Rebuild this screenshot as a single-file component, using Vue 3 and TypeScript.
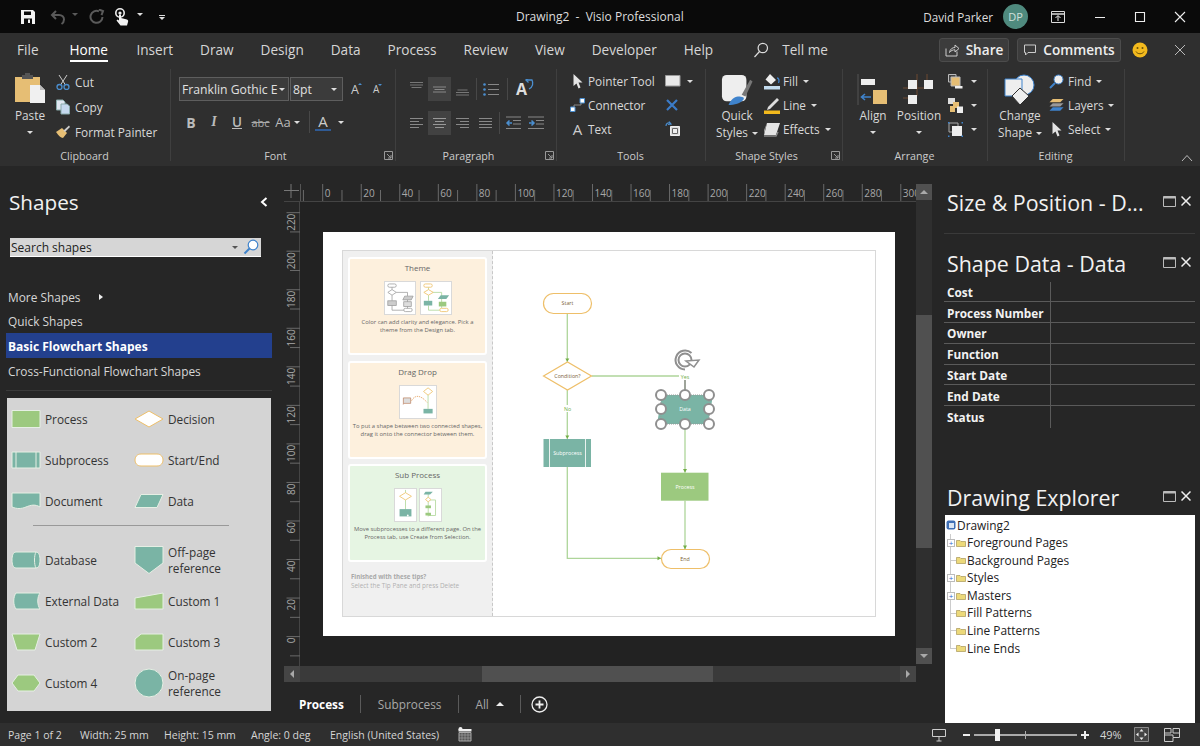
<script setup lang="ts">
const tabs = ['Insert', 'Draw', 'Design', 'Data', 'Process', 'Review', 'View', 'Developer', 'Help']

const TEAL = '#7ab4a5'
const GREEN = '#9cc97f'
const ORANGE = '#eebf69'

interface StencilItem {
  label: string[]
  d: string
  fill: string
  stroke?: string
  extra?: string
}

const stencilTop: StencilItem[] = [
  { label: ['Process'], d: 'M1 6.5H29V23.5H1Z', fill: GREEN },
  { label: ['Decision'], d: 'M1 15L15 7L29 15L15 23Z', fill: '#fff', stroke: ORANGE },
  { label: ['Subprocess'], d: 'M1 7H29V23H1Z', fill: TEAL, extra: 'M5 7V23M25 7V23' },
  { label: ['Start/End'], d: 'M7 9H23C31 9 31 21 23 21H7C-1 21 -1 9 7 9Z', fill: '#fff', stroke: ORANGE },
  { label: ['Document'], d: 'M1 7H29V21C24 18 20 19 15 21C10 23 6 23 1 21Z', fill: TEAL },
  { label: ['Data'], d: 'M7 8.5H29L23 21.5H1Z', fill: TEAL },
]

const stencilBottom: StencilItem[] = [
  { label: ['Database'], d: 'M5 7H25C28 7 29 11 29 15C29 19 28 23 25 23H5C2 23 1 19 1 15C1 11 2 7 5 7Z', fill: TEAL, extra: 'M25 7C23 10 23 20 25 23' },
  { label: ['Off-page', 'reference'], d: 'M1 1.5H29V18L15 28.5L1 18Z', fill: TEAL },
  { label: ['External Data'], d: 'M5 7H29C26 11 26 19 29 23H5C2 19 2 11 5 7Z', fill: TEAL },
  { label: ['Custom 1'], d: 'M1 12L29 7V23H1Z', fill: GREEN },
  { label: ['Custom 2'], d: 'M1 7H29L24 23H6Z', fill: GREEN },
  { label: ['Custom 3'], d: 'M7 7H29V23H1V12Z', fill: GREEN },
  { label: ['Custom 4'], d: 'M7 7H23L29 15L23 23H7L1 15Z', fill: GREEN },
  { label: ['On-page', 'reference'], d: 'M1 15a14 14 0 1 0 28 0a14 14 0 1 0 -28 0Z', fill: TEAL },
]

const dataRows = ['Cost', 'Process Number', 'Owner', 'Function', 'Start Date', 'End Date', 'Status']

const treeRows = [
  { label: 'Foreground Pages', plus: true },
  { label: 'Background Pages', plus: false },
  { label: 'Styles', plus: true },
  { label: 'Masters', plus: true },
  { label: 'Fill Patterns', plus: false },
  { label: 'Line Patterns', plus: false },
  { label: 'Line Ends', plus: false },
]

// ruler scale: 1.927 px per unit, value 0 sits on the page edge
const rulerX = (v: number) => 322.7 + v * 1.927
const rulerY = (v: number) => 636.6 - v * 1.927
const hTicks: number[] = []
for (let v = -10; v <= 310; v += 10) hTicks.push(v)
const vTicks: number[] = []
for (let v = -10; v <= 230; v += 10) vTicks.push(v)
const isLabel = (v: number) => v >= 0 && v % 20 === 0
</script>

<template>
  <div class="app">
    <header class="titlebar">
      <div class="qat">
        <svg class="qat-save" width="16" height="16" viewBox="0 0 16 16"><path d="M1 1H13L15 3V15H1Z" fill="#f2f2f2"/><path d="M4 2.5H11V6H4Z" fill="#0a0a0a"/><path d="M4 9.5H12V15H4Z" fill="#0a0a0a"/><path d="M8 10.5H10V14H8Z" fill="#f2f2f2"/></svg>
        <svg class="qat-undo" width="16" height="16" viewBox="0 0 16 16" fill="none" stroke="#5a5a5a" stroke-width="2"><path d="M6 2L2 6L6 10"/><path d="M2 6H9C12 6 14 8 14 10.5C14 12.5 13 14 11.5 15"/></svg>
        <span class="caret dim qat-c1"></span>
        <svg class="qat-redo" width="16" height="16" viewBox="0 0 16 16" fill="none" stroke="#5a5a5a" stroke-width="2"><path d="M13.5 8A6 6 0 1 1 10 2.4"/><path d="M9 1H13.5V5.5" transform="rotate(20 11 3)"/></svg>
        <svg class="qat-touch" width="16" height="18" viewBox="0 0 16 18"><circle cx="6" cy="5" r="4.2" fill="none" stroke="#eee" stroke-width="1.6"/><circle cx="6" cy="5" r="1.6" fill="#eee"/><path d="M5 6.5H7V10L13 11.5C14 12 14.5 13 14 14L13 17.5H6.5L2.5 12.5L3.5 11.5L5 12.5Z" fill="#f2f2f2"/></svg>
        <span class="caret qat-c2"></span>
        <span class="qat-more"><i></i><span class="caret"></span></span>
      </div>
      <div class="doc-title">Drawing2&nbsp; -&nbsp; Visio Professional</div>
      <div class="account">
        <span class="user">David Parker</span>
        <span class="avatar">DP</span>
      </div>
      <div class="window-btns">
        <svg width="16" height="14" viewBox="0 0 16 14" fill="none" stroke="#ddd"><path d="M1.5 1.5H14.5V12.5H1.5Z"/><path d="M1.5 4H14.5" stroke-width="1.5"/><path d="M8 11V6M5.5 8L8 5.5L10.5 8" stroke="#eee"/></svg>
        <svg width="12" height="12" viewBox="0 0 12 12" stroke="#eee"><path d="M1 6.5H11"/></svg>
        <svg width="12" height="12" viewBox="0 0 12 12" fill="none" stroke="#eee" stroke-width="1.1"><path d="M1.5 1.5H10.5V10.5H1.5Z"/></svg>
        <svg width="12" height="12" viewBox="0 0 12 12" stroke="#eee" stroke-width="1.1"><path d="M1 1L11 11M11 1L1 11"/></svg>
      </div>
    </header>

    <nav class="tabbar">
      <span class="tab file">File</span>
      <span class="tab home">Home</span>
      <span v-for="t in tabs" :key="t" class="tab">{{ t }}</span>
      <span class="tell">
        <svg width="16" height="16" viewBox="0 0 16 16" fill="none" stroke="#ddd" stroke-width="1.2"><circle cx="9.8" cy="6" r="4.7"/><path d="M6.5 9.5L1.5 15"/></svg>
        Tell me
      </span>
      <span class="spacer"></span>
      <button type="button" class="pill share">
        <svg width="15" height="14" viewBox="0 0 15 14" fill="none" stroke="#ccc"><path d="M1 5.5V13H12V8.5"/><path d="M4.5 9.5C5 6 7.5 4.5 10 4.5V2L14 5.5L10 9V6.8C8 6.8 6 7.5 4.5 9.5Z"/></svg>
        Share
      </button>
      <button type="button" class="pill comments">
        <svg width="14" height="14" viewBox="0 0 14 14" fill="none" stroke="#ccc"><path d="M1.5 2H12.5V9.5H5L2.5 12V9.5H1.5Z"/></svg>
        Comments
      </button>
      <svg class="smiley" width="16" height="16" viewBox="0 0 16 16"><circle cx="8" cy="8" r="7.5" fill="#f2b91d"/><circle cx="5.5" cy="6" r="1" fill="#6a5008"/><circle cx="10.5" cy="6" r="1" fill="#6a5008"/><path d="M4 9.5C5.5 12.5 10.5 12.5 12 9.5" fill="none" stroke="#6a5008"/></svg>
      <svg class="tab-close" width="12" height="12" viewBox="0 0 12 12" stroke="#bbb"><path d="M1 1L11 11M11 1L1 11"/></svg>
    </nav>

    <section class="ribbon">
      <!-- Clipboard -->
      <div class="group g-clipboard">
        <div class="group-body">
          <div class="big paste">
            <svg width="32" height="34" viewBox="0 0 32 34"><path d="M1 5H26V30H1Z" fill="#e6be74"/><path d="M8 3H19V7H8Z" fill="#555"/><path d="M11 1H16V4H11Z" fill="#555"/><path d="M16 13H26L31 18V31H16Z" fill="#f0f0f0"/><path d="M26 13V18H31" fill="#bbb"/></svg>
            <span>Paste</span>
            <span class="caret"></span>
          </div>
          <div class="rows">
            <div class="row"><svg width="14" height="16" viewBox="0 0 14 16" fill="none"><path d="M3 1L9.5 11M11 1L4.5 11" stroke="#ccc"/><circle cx="3.5" cy="13" r="2.5" stroke="#4b8fd0" stroke-width="1.3"/><circle cx="10.5" cy="13" r="2.5" stroke="#4b8fd0" stroke-width="1.3"/></svg>Cut</div>
            <div class="row"><svg width="14" height="16" viewBox="0 0 14 16"><path d="M0.5 1H7L9 3V11H0.5Z" fill="#dfe7f1" stroke="#8aa"/><path d="M5 5H11L13.5 7V15H5Z" fill="#c5d8ee" stroke="#8aa"/></svg>Copy</div>
            <div class="row"><svg width="14" height="14" viewBox="0 0 14 14"><path d="M0 7L6 3L11 8L7 13C5 13 2 10 0 7Z" fill="#e6be74"/><path d="M7.5 5.5L13 0.5L14 2L9 7Z" fill="#ccc"/></svg>Format Painter</div>
          </div>
        </div>
        <div class="group-label">Clipboard</div>
      </div>

      <!-- Font -->
      <div class="group g-font">
        <div class="group-body col">
          <div class="font-row">
            <div class="combo combo-font"><span>Franklin Gothic E</span><span class="caret"></span></div>
            <div class="combo combo-size"><span>8pt</span><span class="caret"></span></div>
            <span class="grow">A<i></i></span>
            <span class="shrink">A<i></i></span>
          </div>
          <div class="fmt-row">
            <span class="fmt b">B</span>
            <span class="fmt i">I</span>
            <span class="fmt u">U</span>
            <span class="fmt s">abc</span>
            <span class="fmt aa">Aa</span>
            <span class="caret"></span>
            <span class="vsep"></span>
            <span class="fmt color">A</span>
            <span class="caret"></span>
          </div>
        </div>
        <div class="group-label launch">Font</div>
        <svg class="launcher" width="9" height="9" viewBox="0 0 9 9" fill="none" stroke="#999"><path d="M0.5 8.5V0.5H8.5V8.5Z"/><path d="M3 3L7 7M4 7H7V4"/></svg>
      </div>

      <!-- Paragraph -->
      <div class="group g-para">
        <div class="group-body col">
          <div class="para-row">
            <span class="pbtn"><svg width="15" height="15" viewBox="0 0 15 15" stroke="#777" stroke-width="1.2"><path d="M1 .5H14M1 3H14M2.5 5.5H12.5"/></svg></span>
            <span class="pbtn on"><svg width="15" height="15" viewBox="0 0 15 15" stroke="#888" stroke-width="1.2"><path d="M1 5H14M2.5 7.5H12.5M1 10H14"/></svg></span>
            <span class="pbtn"><svg width="15" height="15" viewBox="0 0 15 15" stroke="#777" stroke-width="1.2"><path d="M2.5 8H12.5M1 10.5H14M1 13H14"/></svg></span>
            <span class="vsep"></span>
            <svg class="bullets" width="16" height="15" viewBox="0 0 16 15"><path d="M5 2.5H16M5 7.5H16M5 12.5H16" stroke="#888" stroke-width="1.2"/><circle cx="1.5" cy="2.5" r="1.3" fill="#4b8fd0"/><circle cx="1.5" cy="7.5" r="1.3" fill="#4b8fd0"/><circle cx="1.5" cy="12.5" r="1.3" fill="#4b8fd0"/></svg>
            <span class="vsep"></span>
            <span class="textdir">A<svg width="9" height="12" viewBox="0 0 9 12" fill="none" stroke="#4b8fd0" stroke-width="1.3"><path d="M1 1H7C8.5 4 8 8 4 10"/><path d="M3.5 3.5L1 1L3.5 -0.5"/></svg></span>
          </div>
          <div class="para-row second">
            <span class="pbtn"><svg width="15" height="15" viewBox="0 0 15 15" stroke="#888"><path d="M1 2.5H14M1 5.5H10M1 8.5H14M1 11.5H10"/></svg></span>
            <span class="pbtn on"><svg width="15" height="15" viewBox="0 0 15 15" stroke="#999"><path d="M1 2.5H14M3 5.5H12M1 8.5H14M3 11.5H12"/></svg></span>
            <span class="pbtn"><svg width="15" height="15" viewBox="0 0 15 15" stroke="#888"><path d="M1 2.5H14M5 5.5H14M1 8.5H14M5 11.5H14"/></svg></span>
            <span class="pbtn"><svg width="15" height="15" viewBox="0 0 15 15" stroke="#888"><path d="M1 2.5H14M1 5.5H14M1 8.5H14M1 11.5H14"/></svg></span>
            <span class="vsep"></span>
            <span class="pbtn"><svg width="16" height="14" viewBox="0 0 16 14"><path d="M1 1H16M8 4.5H16M8 8H16M1 12.5H16" stroke="#888"/><path d="M7 7H2.5M4.5 4.5L2 7L4.5 9.5" fill="none" stroke="#4b8fd0" stroke-width="1.5"/></svg></span>
            <span class="pbtn"><svg width="16" height="14" viewBox="0 0 16 14"><path d="M0 1H16M8 4.5H16M8 8H16M0 12.5H16" stroke="#888"/><path d="M1 7H5.5M3.5 4.5L6 7L3.5 9.5" fill="none" stroke="#4b8fd0" stroke-width="1.5"/></svg></span>
          </div>
        </div>
        <div class="group-label launch">Paragraph</div>
        <svg class="launcher" width="9" height="9" viewBox="0 0 9 9" fill="none" stroke="#999"><path d="M0.5 8.5V0.5H8.5V8.5Z"/><path d="M3 3L7 7M4 7H7V4"/></svg>
      </div>

      <!-- Tools -->
      <div class="group g-tools">
        <div class="group-body">
          <div class="rows tool-rows">
            <div class="row"><svg width="15" height="16" viewBox="0 0 12 16"><path d="M2 1L11 9.5H7L9 14.5L7 15.5L5 10.5L2 13Z" fill="#e4e4e4"/></svg>Pointer Tool</div>
            <div class="row"><svg width="15" height="14" viewBox="0 0 15 14"><path d="M4 10V7H11V4" fill="none" stroke="#888"/><path d="M10 0.5H14.5V5H10Z" fill="#fff" stroke="#4b8fd0"/><path d="M0.5 9H5V13.5H0.5Z" fill="#fff" stroke="#4b8fd0"/></svg>Connector</div>
            <div class="row"><span class="tool-a">A</span>Text</div>
          </div>
          <div class="tool-side">
            <div class="tool-side-row"><svg width="16" height="12" viewBox="0 0 16 12"><path d="M0.5 0.5H15V11H0.5Z" fill="#e8e8e8" stroke="#999"/></svg><span class="caret"></span></div>
            <div class="tool-side-row"><svg width="14" height="12" viewBox="0 0 14 12" stroke="#3b7cc9" stroke-width="2.2"><path d="M2 1L12 11M12 1L2 11"/></svg></div>
            <div class="tool-side-row"><svg width="16" height="16" viewBox="0 0 16 16"><path d="M5.5 5.5H14.5V14.5H5.5Z" fill="#ddd" stroke="#eee"/><path d="M7.5 7.5H12.5V12.5H7.5Z" fill="#eee" stroke="#666"/><path d="M1 5C1 2.5 3 1 5.5 2.5M4 0.5L6 3L3 3.5" fill="none" stroke="#4b8fd0" stroke-width="1.2"/></svg></div>
          </div>
        </div>
        <div class="group-label">Tools</div>
      </div>

      <!-- Shape Styles -->
      <div class="group g-styles">
        <div class="group-body">
          <div class="big quick">
            <svg width="32" height="32" viewBox="0 0 34 34"><rect x="1" y="1" width="26" height="28" rx="5" fill="#eee"/><path d="M22 22L31 6L33.5 8L26 24Z" fill="#777"/><path d="M8 33C10 28 14 24 18 24C23 24 25 25 24 27C21 31 14 33 8 33Z" fill="#3f83cc"/></svg>
            <span>Quick</span>
            <span>Styles<i class="caret inl"></i></span>
          </div>
          <div class="rows style-rows">
            <div class="row"><svg width="18" height="17" viewBox="0 0 18 17"><path d="M7 1L13 7L8 11.5L2.5 6.5Z" fill="#eee"/><path d="M14 5C16 5 16.5 8 15.5 10" fill="none" stroke="#3f83cc" stroke-width="1.3"/><path d="M1 13H17V16.5H1Z" fill="#c3dcef"/></svg>Fill<i class="caret inl"></i></div>
            <div class="row"><svg width="18" height="17" viewBox="0 0 18 17"><path d="M5 10L14 1L16 3L7 12L4 13Z" fill="#ddd"/><path d="M1 13.5H17V17H1Z" fill="#f2b91d"/></svg>Line<i class="caret inl"></i></div>
            <div class="row"><svg width="18" height="16" viewBox="0 0 18 16"><path d="M4 2H17L13 14H1Z" fill="#e4e4e4"/><path d="M1 14L4 2L1 9Z" fill="#999"/><path d="M1 15H13L15 11" fill="none" stroke="#888" stroke-width="1.5"/></svg>Effects<i class="caret inl"></i></div>
          </div>
        </div>
        <div class="group-label launch">Shape Styles</div>
        <svg class="launcher" width="9" height="9" viewBox="0 0 9 9" fill="none" stroke="#999"><path d="M0.5 8.5V0.5H8.5V8.5Z"/><path d="M3 3L7 7M4 7H7V4"/></svg>
      </div>

      <!-- Arrange -->
      <div class="group g-arrange">
        <div class="group-body">
          <div class="big align">
            <svg width="32" height="32" viewBox="0 0 32 32"><path d="M1 0V31" stroke="#555"/><path d="M4 5H18V11H4Z" fill="#eee"/><path d="M16 16H30V30H16Z" fill="#e6be74"/><path d="M14 23H5M8 20L4.5 23L8 26" fill="none" stroke="#3f83cc" stroke-width="1.6"/></svg>
            <span>Align</span>
            <span class="caret"></span>
          </div>
          <div class="big position">
            <svg width="32" height="32" viewBox="0 0 32 32"><path d="M14 0V22M24 0V8M0 14H30M0 24H6" stroke="#6e4a32"/><path d="M5 5H14V14H5Z" fill="#eee" transform="translate(0 1)"/><path d="M21 6H30V15H21Z" fill="#eee"/><path d="M5 21H14V30H5Z" fill="#eee"/></svg>
            <span>Position</span>
            <span class="caret"></span>
          </div>
          <div class="arrange-side">
            <div class="tool-side-row"><svg width="15" height="15" viewBox="0 0 15 15"><path d="M0.5 0.5H8V8H0.5Z" fill="#444" stroke="#bbb"/><path d="M3 3H12V12H3Z" fill="#e6be74" stroke="#bbb"/><path d="M7 12H14.5V14.5H7Z" fill="#eee"/></svg><span class="caret"></span></div>
            <div class="tool-side-row"><svg width="15" height="15" viewBox="0 0 15 15"><path d="M0 0H7V6H0Z" fill="#ddd"/><path d="M5 4H11V10H5Z" fill="#e6be74"/><path d="M9 8.5H15V15H9Z" fill="#eee"/><path d="M2 8H7V14H2Z" fill="#e6be74"/></svg><span class="caret"></span></div>
            <div class="tool-side-row"><svg width="15" height="15" viewBox="0 0 15 15"><path d="M1 1H10V10H1Z" fill="none" stroke="#aaa"/><path d="M4 4H14V14H4Z" fill="#eee"/><path d="M0 0H1.5V1.5H0ZM13.5 0H15V1.5H13.5ZM0 13.5H1.5V15H0ZM13.5 13.5H15V15H13.5Z" fill="#3f83cc"/></svg><span class="caret"></span></div>
          </div>
        </div>
        <div class="group-label">Arrange</div>
      </div>

      <!-- Editing -->
      <div class="group g-editing">
        <div class="group-body">
          <div class="big change">
            <svg width="32" height="32" viewBox="0 0 32 32"><circle cx="20" cy="11" r="10" fill="#eee" stroke="#3f83cc"/><path d="M1 5H18V22H1Z" fill="#eee" stroke="#3f83cc"/><path d="M16 14L25 22L16 31L8 22Z" fill="#eee" stroke="#2e2e2e"/></svg>
            <span>Change</span>
            <span>Shape<i class="caret inl"></i></span>
          </div>
          <div class="rows edit-rows">
            <div class="row"><svg width="15" height="15" viewBox="0 0 15 15"><circle cx="9.5" cy="5.5" r="4.5" fill="#eee" stroke="#3f83cc"/><path d="M6 9L1 14" stroke="#3f83cc" stroke-width="2"/></svg>Find<i class="caret inl"></i></div>
            <div class="row"><svg width="15" height="14" viewBox="0 0 16 14"><path d="M4 0.5H15.5L12 4H0.5Z" fill="#e6be74"/><path d="M4 5H15.5L12 8.5H0.5Z" fill="#999"/><path d="M4 9.5H15.5L12 13H0.5Z" fill="#3f83cc"/></svg>Layers<i class="caret inl"></i></div>
            <div class="row"><svg width="15" height="16" viewBox="0 0 12 16"><path d="M2 1L11 9.5H7L9 14.5L7 15.5L5 10.5L2 13Z" fill="#e4e4e4"/></svg>Select<i class="caret inl"></i></div>
          </div>
        </div>
        <div class="group-label">Editing</div>
      </div>

      <svg class="collapse" width="12" height="8" viewBox="0 0 12 8" fill="none" stroke="#bbb"><path d="M1 7L6 1.5L11 7"/></svg>
    </section>

    <main class="workspace">
      <!-- Shapes pane -->
      <aside class="shapes">
        <div class="shapes-head">
          <h2>Shapes</h2>
          <svg width="8" height="10" viewBox="0 0 8 10" fill="none" stroke="#fff" stroke-width="2"><path d="M6.5 1L2 5L6.5 9"/></svg>
        </div>
        <div class="search">
          <span class="search-text">Search shapes</span>
          <span class="caret dark"></span>
          <svg width="16" height="16" viewBox="0 0 16 16"><circle cx="10" cy="6" r="4.8" fill="#fff" stroke="#3f83cc" stroke-width="1.2"/><path d="M6.5 9.5L1.5 14.5" stroke="#3f83cc" stroke-width="2"/></svg>
        </div>
        <div class="menu-item more">More Shapes<i class="tri-right"></i></div>
        <div class="menu-item quick-item">Quick Shapes</div>
        <div class="menu-item active">Basic Flowchart Shapes</div>
        <div class="menu-item">Cross-Functional Flowchart Shapes</div>
        <div class="menu-rule"></div>
        <div class="stencil">
          <div class="stencil-grid">
            <div v-for="s in stencilTop" :key="s.label[0]" class="st-item">
              <svg width="30" height="30" viewBox="0 0 30 30"><path :d="s.d" :fill="s.fill" :stroke="s.stroke || '#e6efe4'"/><path v-if="s.extra" :d="s.extra" fill="none" stroke="#e6efe4"/></svg>
              <span class="st-label"><span v-for="l in s.label" :key="l">{{ l }}</span></span>
            </div>
          </div>
          <div class="stencil-rule"></div>
          <div class="stencil-grid">
            <div v-for="s in stencilBottom" :key="s.label[0]" class="st-item">
              <svg width="30" height="30" viewBox="0 0 30 30"><path :d="s.d" :fill="s.fill" :stroke="s.stroke || '#e6efe4'"/><path v-if="s.extra" :d="s.extra" fill="none" stroke="#e6efe4"/></svg>
              <span class="st-label"><span v-for="l in s.label" :key="l">{{ l }}</span></span>
            </div>
          </div>
        </div>
      </aside>

      <!-- Drawing area -->
      <section class="center">
        <svg class="ruler-h" width="632" height="18" viewBox="284 184 632 18">
          <path d="M284 190.5H299M291 184V198" stroke="#777"/>
          <path d="M300.5 184V202" stroke="#555"/>
          <path d="M284 201.5H916" stroke="#444"/>
          <g v-for="v in hTicks" :key="v">
            <path v-if="rulerX(v) > 301" :d="`M${rulerX(v)} ${v % 20 === 0 ? 184 : 190}V201`" stroke="#6a6a6a"/>
            <text v-if="isLabel(v)" :x="rulerX(v) + 2" y="197" class="ruler-text">{{ v }}</text>
          </g>
        </svg>
        <div class="vscroll">
          <span class="vs-btn up"><i></i></span>
          <span class="vs-thumb"></span>
          <span class="vs-btn down"><i></i></span>
        </div>
        <svg class="ruler-v" width="16" height="464" viewBox="284 202 16 464">
          <path d="M299.5 202V666" stroke="#444"/>
          <g v-for="v in vTicks" :key="v">
            <path :d="`M${v % 20 === 0 ? 286.5 : 290} ${rulerY(v)}H300`" stroke="#6a6a6a"/>
            <text v-if="isLabel(v)" x="295.5" :y="rulerY(v) + 1" text-anchor="end" class="ruler-text" :transform="`rotate(-90 295.5 ${rulerY(v) + 1})`">{{ v }}</text>
          </g>
        </svg>
        <div class="canvas">
          <div class="page">
            <div class="sheet">
              <div class="tips">
                <div class="tip theme">
                  <div class="tip-title">Theme</div>
                  <div class="thumbs">
                    <svg class="thumb w32" viewBox="0 0 32 34" fill="none" stroke="#999" stroke-width=".8"><rect x="3" y="2" width="9" height="3.5" rx="1.7"/><path d="M7.5 5.5V8M7.5 8L12 11L7.5 14L3 11ZM7.5 14V20M12 11H24V15"/><path d="M21 15H30L28 19H19Z" fill="#ccc"/><rect x="3" y="20" width="9" height="5" fill="#ccc"/><rect x="20" y="21" width="8" height="5" fill="#ddd"/><path d="M7.5 25V30H20M24 19V21M24 26V28"/><rect x="20" y="28" width="9" height="3.5" rx="1.7"/></svg>
                    <svg class="thumb w32" viewBox="0 0 32 34" fill="none" stroke="#b9dca5" stroke-width="1"><path d="M8 5.5V20M8 11H22V28M8 25V30H20"/><rect x="3" y="2" width="9" height="3.5" rx="1.7" fill="#fff" stroke="#f0c878"/><path d="M8 8L13 11L8 14L3 11Z" fill="#fff" stroke="#f0c878"/><path d="M21 14H30L27 18H18Z" fill="#7ab4a5" stroke="none"/><rect x="3" y="20" width="9" height="5" fill="#7ab4a5" stroke="none"/><rect x="19" y="21" width="8" height="5" fill="#9cc97f" stroke="none"/><rect x="20" y="28" width="9" height="3.5" rx="1.7" fill="#fff" stroke="#f0c878"/></svg>
                  </div>
                  <p>Color can add clarity and elegance. Pick a<br>theme from the Design tab.</p>
                </div>
                <div class="tip drag">
                  <div class="tip-title">Drag Drop</div>
                  <div class="thumbs">
                    <svg class="thumb w38" viewBox="0 0 38 35" fill="none"><path d="M30 7V25" stroke="#b9dca5"/><path d="M30 2L35 6L30 10L25 6Z" fill="#fff" stroke="#f0c878"/><rect x="25" y="25" width="10" height="5" fill="#7ab4a5"/><path d="M12 16C16 9 22 10 29 18" stroke="#e8a96a" stroke-dasharray="1.5 1"/><path d="M3 13H11V19H4L3 20Z" fill="#ddd" stroke="#b5744f" stroke-width=".7"/></svg>
                  </div>
                  <p>To put a shape between two connected shapes,<br>drag it onto the connector between them.</p>
                </div>
                <div class="tip sub">
                  <div class="tip-title">Sub Process</div>
                  <div class="thumbs">
                    <svg class="thumb w23" viewBox="0 0 23 33" fill="none"><path d="M11.5 0V22" stroke="#b9dca5"/><path d="M11.5 3L18 7L11.5 11L5 7Z" fill="#fff" stroke="#f0c878"/><rect x="5" y="21" width="13" height="8" fill="#7ab4a5"/><circle cx="14" cy="28" r="1" fill="#fff"/></svg>
                    <svg class="thumb w23" viewBox="0 0 23 33" fill="none"><path d="M9 3V29M9 11H17V28H9" stroke="#b9dca5"/><path d="M6 2H14L11 5H4Z" fill="#7ab4a5"/><path d="M9 8L12 10.5L9 13L6 10.5Z" fill="#fff" stroke="#f0c878"/><rect x="6" y="17" width="6" height="3" fill="#9cc97f"/><rect x="6" y="25" width="6" height="3" fill="#9cc97f"/></svg>
                  </div>
                  <p>Move subprocesses to a different page. On the<br>Process tab, use Create from Selection.</p>
                </div>
                <div class="tips-foot">
                  <strong>Finished with these tips?</strong>
                  <span>Select the Tip Pane and press Delete</span>
                </div>
              </div>
              <svg class="flow" viewBox="492 251 383 365" width="383" height="365">
                <g fill="none" stroke="#aed59a" stroke-width="1.3">
                  <path d="M567.3 313.3V362"/>
                  <path d="M567.3 390V439"/>
                  <path d="M567.3 466.7V558.3H661"/>
                  <path d="M591.7 376H685V395"/>
                  <path d="M685 424V472.7"/>
                  <path d="M685 500.7V549.3"/>
                </g>
                <g fill="#72ad46">
                  <path d="M565.3 358.5H569.3L567.3 361.7Z"/>
                  <path d="M565.3 435.5H569.3L567.3 438.7Z"/>
                  <path d="M683 469H687L685 472.5Z"/>
                  <path d="M683 545.5H687L685 549.2Z"/>
                  <path d="M657.5 556.3V560.3L661 558.3Z"/>
                </g>
                <rect x="543.5" y="293.5" width="48" height="20" rx="10" fill="#fff" stroke="#eebf69" stroke-width="1.2"/>
                <text x="567.5" y="305" class="flow-t dark">Start</text>
                <path d="M543.5 376L567.5 362L591.5 376L567.5 390Z" fill="#fff" stroke="#eebf69" stroke-width="1.2"/>
                <text x="567.5" y="378" class="flow-t dark">Condition?</text>
                <rect x="562" y="405" width="11" height="7" fill="#fff"/>
                <text x="567.5" y="411" class="flow-t label">No</text>
                <rect x="665" y="395" width="40" height="29" fill="#7ab4a5"/>
                <rect x="543.5" y="439" width="47.5" height="28" fill="#7ab4a5"/>
                <path d="M549.5 439V467M585.5 439V467" stroke="#eaf2ef"/>
                <text x="567.5" y="455" class="flow-t">Subprocess</text>
                <path d="M662 395H713L708 424H657Z" fill="#7ab4a5"/>
                <text x="685" y="411" class="flow-t">Data</text>
                <rect x="661" y="472.7" width="47.5" height="28" fill="#9cc97f"/>
                <text x="685" y="488.5" class="flow-t">Process</text>
                <rect x="661.5" y="549.5" width="48" height="19" rx="9.5" fill="#fff" stroke="#eebf69" stroke-width="1.2"/>
                <text x="685" y="561" class="flow-t dark">End</text>
                <!-- selection -->
                <rect x="661" y="395" width="48" height="29" fill="none" stroke="#999" stroke-dasharray="1 1"/>
                <path d="M685 373V395" stroke="#8f8f8f" stroke-width="1.5"/>
                <circle cx="685" cy="360" r="6.5" fill="#fff" stroke="#8f8f8f" stroke-width="2"/>
                <path d="M685 369.5A9.5 9.5 0 1 1 691.5 353" fill="none" stroke="#8f8f8f" stroke-width="2"/>
                <path d="M686 361L699 360L694 367Z" fill="#fff" stroke="#8f8f8f" stroke-width="1.5"/>
                <rect x="679" y="373" width="12" height="7" fill="#fff"/>
                <text x="685" y="379" class="flow-t label">Yes</text>
                <g fill="#fff" stroke="#8f8f8f" stroke-width="2">
                  <circle v-for="p in [[661,395],[685,395],[709,395],[661,409],[709,409],[661,424],[685,424],[709,424]]" :key="p.join()" :cx="p[0]" :cy="p[1]" r="5"/>
                </g>
              </svg>
            </div>
          </div>
        </div>
        <div class="hscroll">
          <span class="hs-btn"><i class="left"></i></span>
          <span class="hs-thumb"></span>
          <span class="hs-btn end"><i class="right"></i></span>
        </div>
        <div class="sheet-tabs">
          <span class="st active">Process</span>
          <span class="st-sep"></span>
          <span class="st">Subprocess</span>
          <span class="st-sep"></span>
          <span class="st all">All<i></i></span>
          <span class="st-sep"></span>
          <svg width="17" height="17" viewBox="0 0 17 17" fill="none" stroke="#eee" stroke-width="1.3"><circle cx="8.5" cy="8.5" r="7.5"/><path d="M8.5 4.5V12.5M4.5 8.5H12.5" stroke-width="1.8"/></svg>
        </div>
      </section>

      <!-- Right panes -->
      <aside class="panes">
        <div class="pane-head first">
          <h2>Size &amp; Position - D...</h2>
          <svg class="pane-max" width="13" height="11" viewBox="0 0 13 11" fill="none" stroke="#bbb"><path d="M0.5 0.5H12.5V10.5H0.5Z"/><path d="M0.5 1.5H12.5" stroke-width="2"/></svg>
          <svg width="10" height="10" viewBox="0 0 10 10" stroke="#eee" stroke-width="1.5"><path d="M0.5 0.5L9.5 9.5M9.5 0.5L0.5 9.5"/></svg>
        </div>
        <div class="pane-rule"></div>
        <div class="pane-head second">
          <h2>Shape Data - Data</h2>
          <svg class="pane-max" width="13" height="11" viewBox="0 0 13 11" fill="none" stroke="#bbb"><path d="M0.5 0.5H12.5V10.5H0.5Z"/><path d="M0.5 1.5H12.5" stroke-width="2"/></svg>
          <svg width="10" height="10" viewBox="0 0 10 10" stroke="#eee" stroke-width="1.5"><path d="M0.5 0.5L9.5 9.5M9.5 0.5L0.5 9.5"/></svg>
        </div>
        <div class="data-table">
          <div v-for="r in dataRows" :key="r" class="data-row"><span>{{ r }}</span></div>
        </div>
        <div class="pane-head third">
          <h2>Drawing Explorer</h2>
          <svg class="pane-max" width="13" height="11" viewBox="0 0 13 11" fill="none" stroke="#bbb"><path d="M0.5 0.5H12.5V10.5H0.5Z"/><path d="M0.5 1.5H12.5" stroke-width="2"/></svg>
          <svg width="10" height="10" viewBox="0 0 10 10" stroke="#eee" stroke-width="1.5"><path d="M0.5 0.5L9.5 9.5M9.5 0.5L0.5 9.5"/></svg>
        </div>
        <div class="tree">
          <div class="tree-root">
            <svg width="10" height="10" viewBox="0 0 10 10"><rect x="0.5" y="0.5" width="9" height="9" rx="2" fill="#3f6fb5"/><path d="M3 3H8V8H3Z" fill="#dbe6f4"/></svg>
            Drawing2
          </div>
          <div class="tree-list">
            <div v-for="t in treeRows" :key="t.label" class="tree-row">
              <span v-if="t.plus" class="plus">+</span>
              <span v-else class="elbow"></span>
              <svg width="10" height="8" viewBox="0 0 10 8"><path d="M0.5 1.5H4L5 2.5H9.5V7.5H0.5Z" fill="#ecd97a" stroke="#9c8a46" stroke-width=".6"/></svg>
              {{ t.label }}
            </div>
          </div>
        </div>
      </aside>
    </main>

    <footer class="statusbar">
      <span class="s1">Page 1 of 2</span>
      <span class="s2">Width: 25 mm</span>
      <span class="s3">Height: 15 mm</span>
      <span class="s4">Angle: 0 deg</span>
      <span class="s5">English (United States)</span>
      <svg class="macro" width="14" height="15" viewBox="0 0 14 15"><path d="M0.5 2H13.5V4.5H0.5Z" fill="#eee"/><circle cx="2.5" cy="2" r="2" fill="#eee"/><path d="M1 5.5H13V14H1Z" fill="#555" stroke="#aaa"/><path d="M4 5.5V14M7 5.5V14M10 5.5V14M1 8H13M1 11H13" stroke="#aaa" stroke-width=".6"/></svg>
      <span class="spacer"></span>
      <svg class="present" width="14" height="14" viewBox="0 0 14 14" fill="none" stroke="#ccc"><path d="M0.5 1.5H13.5V8.5H0.5Z"/><path d="M7 8.5V13M4.5 13H9.5"/></svg>
      <span class="zoom-minus"></span>
      <span class="slider"><i class="mid"></i><i class="knob"></i></span>
      <span class="zoom-plus"></span>
      <span class="pct">49%</span>
      <svg class="fit" width="15" height="15" viewBox="0 0 15 15"><path d="M0.5 0.5H14.5V14.5H0.5Z" fill="#444" stroke="#888"/><path d="M7.5 2L9.5 4.5H5.5ZM7.5 13L5.5 10.5H9.5ZM2 7.5L4.5 5.5V9.5ZM13 7.5L10.5 9.5V5.5Z" fill="#eee"/></svg>
      <svg class="switch" width="16" height="14" viewBox="0 0 16 14" fill="none" stroke="#ccc"><path d="M0.5 0.5H7V5H0.5ZM9 0.5H15.5V5H9ZM0.5 5V13.5H9V10M0.5 7H9V9.5H15.5V5"/></svg>
    </footer>
  </div>
</template>

<style>
html, body { background: #262626; }
</style>

<style scoped>
.app {
  width: 1200px; height: 746px; overflow: hidden;
  display: flex; flex-direction: column;
  background: #262626; color: #e6e6e6;
  font-family: "Open Sans", "Noto Sans", "Liberation Sans", sans-serif;
  font-size: 12px;
}
i { font-style: normal; }
svg { flex-shrink: 0; }
.spacer { flex: 1; }
.caret {
  display: inline-block; width: 0; height: 0; flex-shrink: 0;
  border-left: 3px solid transparent; border-right: 3px solid transparent;
  border-top: 3px solid #ddd;
}
.caret.dim { border-top-color: #5a5a5a; }
.caret.dark { border-top-color: #444; }
.caret.inl { margin-left: 4px; vertical-align: 2px; }

/* title bar */
.titlebar {
  height: 33px; flex-shrink: 0; background: #0a0a0a;
  display: flex; align-items: center; position: relative;
}
.qat { display: flex; align-items: center; padding-left: 20px; width: 510px; box-sizing: border-box; }
.qat-undo { margin-left: 14px; }
.qat-c1 { margin-left: 6px; margin-bottom: 4px; }
.qat-redo { margin-left: 11px; }
.qat-touch { margin-left: 9px; }
.qat-c2 { margin-left: 7px; margin-bottom: 4px; }
.qat-more { display: flex; flex-direction: column; align-items: center; gap: 1px; margin-left: 16px; margin-top: 2px; }
.qat-more i { width: 6px; height: 1px; background: #ddd; }
.doc-title { width: 180px; margin-left: 6px; white-space: nowrap; font-size: 12px; color: #ddd; }
.account { margin-left: auto; display: flex; align-items: center; gap: 10px; margin-right: 22px; }
.user { font-size: 11.7px; color: #ddd; }
.avatar {
  width: 25px; height: 25px; border-radius: 50%;
  background: #4f8a7e; color: #cfe0dc; font-size: 11px;
  display: flex; align-items: center; justify-content: center;
}
.window-btns { display: flex; align-items: center; gap: 28px; padding-right: 14px; }

/* tabs */
.tabbar {
  height: 33px; flex-shrink: 0; background: #2f2f2f;
  display: flex; align-items: center; padding-left: 17px; font-size: 13.6px; color: #d6d6d6;
}
.tab { position: relative; margin-right: 27px; white-space: nowrap; }
.tab.file { margin-right: 31px; }
.tab.home { color: #fff; font-weight: 500; margin-right: 28.5px; }
.tab.home::after {
  content: ""; position: absolute; left: 0; right: 0; bottom: -3px; height: 2.5px; background: #fff;
}
.tell { display: flex; align-items: center; gap: 13px; margin-left: 13px; }
.pill {
  height: 24px; border: 1px solid #4c4c4c; background: #3c3c3c; border-radius: 3px;
  color: #eee; font: 600 13.6px "Open Sans", sans-serif;
  display: flex; align-items: center; justify-content: center; gap: 6px; padding: 0;
}
.share { width: 70px; margin-right: 8px; }
.comments { width: 104px; }
.smiley { margin-left: 11px; }
.tab-close { margin-left: 26px; margin-right: 14px; }

/* ribbon */
.ribbon {
  height: 100px; flex-shrink: 0; background: #2f2f2f;
  display: flex; position: relative; font-size: 11.8px; color: #d8d8d8;
}
.group { position: relative; height: 100%; display: flex; flex-direction: column; }
.group::after {
  content: ""; position: absolute; right: 0; top: 3px; bottom: 5px; width: 1px; background: #3f3f3f;
}
.group-body { flex: 1; display: flex; min-height: 0; }
.group-body.col { flex-direction: column; }
.group-label { height: 20px; line-height: 20px; text-align: center; font-size: 10.7px; color: #ccc; flex-shrink: 0; padding-right: 2px; }
.group-label.launch { padding-right: 16px; }
.launcher { position: absolute; right: 3px; bottom: 6px; }
.g-clipboard { width: 171px; }
.g-font { width: 225px; }
.g-para { width: 161px; }
.g-tools { width: 149px; }
.g-styles { width: 137px; }
.g-arrange { width: 145px; }
.g-editing { width: 137px; }

.big { display: flex; flex-direction: column; align-items: center; line-height: 17px; white-space: nowrap; }
.big svg { margin-bottom: 1px; }
.big .caret { margin-top: 7px; }
.rows { display: flex; flex-direction: column; }
.row { height: 24px; display: flex; align-items: center; white-space: nowrap; flex-shrink: 0; }

.paste { width: 46px; margin-left: 7px; padding-top: 6px; }
.g-clipboard .rows { margin-left: 3px; padding-top: 3px; }
.g-clipboard .row { height: 25px; gap: 5px; }

.font-row { display: flex; align-items: center; margin: 11px 0 0 8px; }
.combo {
  height: 24px; box-sizing: border-box; background: #3b3b3b; border: 1px solid #5e5e5e;
  display: flex; align-items: center; justify-content: space-between; padding: 0 3px 0 2px;
  font-size: 12.2px; color: #e0e0e0; white-space: nowrap;
}
.combo-font { width: 110px; overflow: hidden; }
.combo-size { width: 53px; margin-left: 1px; padding-right: 5px; }
.grow, .shrink { position: relative; color: #ccc; }
.grow { font-size: 12.5px; margin-left: 8px; }
.shrink { font-size: 10px; margin-left: 14px; }
.grow i, .shrink i {
  position: absolute; right: -3px; top: 2px; width: 0; height: 0;
  border-left: 2px solid transparent; border-right: 2px solid transparent;
}
.grow i { border-bottom: 2px solid #4b8fd0; }
.shrink i { border-top: 2px solid #4b8fd0; }

.fmt-row { display: flex; align-items: center; margin: 9px 0 0 14px; height: 24px; color: #bbb; }
.fmt { text-align: center; }
.b { font-weight: 700; font-size: 14px; width: 12px; }
.i { font-style: italic; font-weight: 700; font-size: 14px; margin-left: 11px; width: 12px; font-family: "Liberation Serif", serif; }
.u { text-decoration: underline; font-size: 13.5px; font-weight: 600; margin-left: 11px; width: 12px; }
.s { text-decoration: line-through; font-size: 11px; margin-left: 8.5px; width: 17px; color: #aaa; }
.aa { font-size: 13px; margin-left: 5.5px; width: 18px; }
.fmt-row .caret { margin-left: 2px; }
.fmt-row .vsep { margin: 0 5px 0 9px; }
.color { font-size: 15px; width: 16px; color: #ccc; border-bottom: 2px solid #2f5a94; line-height: 15px; margin-right: 5px; }
.vsep { width: 1px; height: 22px; background: #484848; flex-shrink: 0; }

.para-row { display: flex; align-items: center; margin: 11px 0 0 9px; height: 24px; }
.para-row.second { margin-top: 10px; }
.pbtn { width: 23px; height: 24px; display: flex; align-items: center; justify-content: center; flex-shrink: 0; }
.pbtn.on { background: #424242; }
.para-row .vsep { margin: 0 6px 0 2px; }
.second .vsep { margin: 0 1.5px 0 2px; }
.bullets { margin: 0 6px 0 0; }
.textdir { position: relative; font-size: 16px; font-weight: 700; color: #ddd; margin-left: 2px; line-height: 20px; }
.textdir svg { position: absolute; left: 9px; top: 0; }

.tool-rows { margin-left: 13px; padding-top: 3px; width: 95px; flex-shrink: 0; }
.tool-rows .row { gap: 3px; }
.tool-a { font-size: 15px; color: #ccc; width: 15px; text-align: center; }
.tool-side { display: flex; flex-direction: column; padding-top: 3px; }
.tool-side-row { height: 24px; display: flex; align-items: center; gap: 6px; }

.quick { width: 44px; margin-left: 9px; padding-top: 8px; }
.style-rows { margin-left: 4px; padding-top: 3px; }
.style-rows .row { gap: 2px; }
.style-rows .caret.inl { margin-left: 3px; }
.align { width: 40px; margin-left: 10px; padding-top: 8px; }
.position { width: 52px; padding-top: 8px; }
.arrange-side { display: flex; flex-direction: column; padding-top: 3px; margin-left: 3px; }
.arrange-side .tool-side-row { gap: 8px; }
.change { width: 50px; margin-left: 7px; padding-top: 8px; }
.edit-rows { margin-left: 4px; padding-top: 3px; }
.edit-rows .row { gap: 4px; }
.edit-rows .caret.inl { margin-left: 0; }
.collapse { position: absolute; right: 7px; bottom: 4px; }

/* workspace */
.workspace {
  flex: 1; min-height: 0; display: grid; grid-template-columns: 280px 656px 264px; background: #262626;
}

.shapes { padding: 0 8px 0 6px; display: flex; flex-direction: column; }
.shapes-head { display: flex; align-items: center; justify-content: space-between; height: 75px; padding: 0 4px 3px 3px; box-sizing: border-box; margin-bottom: -3px; flex-shrink: 0; }
h2 { margin: 0; font-weight: 400; color: #f2f2f2; white-space: nowrap; }
.shapes-head h2 { font-size: 20.7px; }
.search {
  height: 19px; margin: 0 11px 0 4px; background: #d6d6d6; border-bottom: 1px solid #fff; box-sizing: border-box;
  display: flex; align-items: center; color: #222; font-size: 12px; padding: 0 1px 0 1px; flex-shrink: 0;
}
.search-text { flex: 1; }
.search .caret { margin-right: 5px; border-top-color: #555; }
.search svg { margin-right: 1px; }
.menu-item { height: 25px; display: flex; align-items: center; padding-left: 2px; font-size: 11.9px; color: #d6d6d6; white-space: nowrap; flex-shrink: 0; }
.more { margin-top: 28px; height: 24px; position: relative; }
.quick-item { height: 24px; }
.tri-right {
  margin-left: 18px; width: 0; height: 0;
  border-top: 3.5px solid transparent; border-bottom: 3.5px solid transparent; border-left: 4px solid #eee;
}
.menu-item.active { background: #23408e; color: #fff; font-weight: 700; font-size: 12px; padding-top: 1px; box-sizing: border-box; }
.menu-rule { height: 1px; background: #3a3a3a; margin-top: 7px; margin-bottom: 7px; flex-shrink: 0; }
.stencil {
  width: 264px; height: 313px; margin-left: 1px; background: #d4d4d4; color: #333; font-size: 11.8px;
  box-sizing: border-box; padding: 0.5px 0 0 4px; flex-shrink: 0;
}
.stencil-grid { display: grid; grid-template-columns: 123px 130px; grid-auto-rows: 41px; }
.st-item { display: flex; align-items: center; gap: 4px; }
.st-label { display: flex; flex-direction: column; line-height: 16.5px; white-space: nowrap; }
.stencil-rule { height: 1px; margin: 3px 0 14px 22px; width: 196px; background: #999; }

/* drawing area */
.center {
  padding: 18px 0 0 4px;
  display: grid; grid-template-columns: 16px 616px 16px 20px; grid-template-rows: 18px 464px 16px 41px;
}
.ruler-h { grid-column: 1 / 3; grid-row: 1; display: block; }
.ruler-v { grid-column: 1; grid-row: 2; display: block; }
.ruler-text { font-size: 10px; fill: #a8a8a8; font-family: "Open Sans", sans-serif; }
.vscroll {
  grid-column: 3; grid-row: 1 / 3; height: 480px; background: #2f2f2f; position: relative;
}
.vs-btn { position: absolute; left: 0; width: 16px; height: 16px; background: #505050; display: flex; align-items: center; justify-content: center; }
.vs-btn.up { top: 0; }
.vs-btn.down { bottom: 0; }
.vs-btn i { width: 0; height: 0; border-left: 4px solid transparent; border-right: 4px solid transparent; }
.vs-btn.up i { border-bottom: 4px solid #aaa; }
.vs-btn.down i { border-top: 4px solid #aaa; }
.vs-thumb { position: absolute; left: 0; width: 16px; top: 131px; height: 233px; background: #505050; }
.canvas { grid-column: 2; grid-row: 2; background: #222; padding: 30px 0 0 23px; overflow: hidden; }
.page {
  width: 572px; height: 404px; background: #fff; box-sizing: border-box; padding: 18px 19px 19px;
}
.sheet { display: flex; height: 367px; border: 1px solid #d8d8d8; box-sizing: border-box; width: 534px; }
.tips {
  width: 150px; flex-shrink: 0; background: #f0f0f0; box-sizing: border-box;
  border-right: 1px dashed #c8c8c8; padding: 6px 5px 0 5px;
  display: flex; flex-direction: column; gap: 5.5px;
}
.tip {
  height: 98px; border: 2px solid #fff; border-radius: 3px; box-sizing: border-box; flex-shrink: 0;
  background: #fdf0dd; text-align: center; color: #666; padding-top: 4px;
}
.tip.sub { background: #e6f5e3; }
.tip-title { font-size: 8px; line-height: 10px; color: #666; }
.thumbs { display: flex; justify-content: center; gap: 4px; margin-top: 8px; height: 34px; }
.sub .thumbs { gap: 2px; }
.thumb { height: 34px; background: #fff; border: 1px solid #d9d9d9; box-sizing: border-box; flex-shrink: 0; }
.w32 { width: 32px; }
.w38 { width: 38px; }
.w23 { width: 23px; }
.tip p { margin: 3px 0 0; font-size: 5.85px; line-height: 8.3px; color: #666; white-space: nowrap; }
.tips-foot { display: flex; flex-direction: column; padding: 4px 3px 0; font-size: 6.1px; line-height: 9px; color: #b0b0b0; white-space: nowrap; }
.tips-foot span { font-size: 6.4px; }
.tips-foot strong { color: #a8a8a8; }
.flow { display: block; flex: 1; min-width: 0; margin-left: -1px; }
.flow-t { font-size: 5.3px; text-anchor: middle; fill: #fff; font-family: "Open Sans", sans-serif; }
.flow-t.dark { fill: #7a6238; }
.flow-t.label { fill: #72ad46; }

.hscroll { grid-column: 1 / 3; grid-row: 3; background: #3a3a3a; position: relative; }
.hs-btn { position: absolute; left: 0; top: 0; width: 16px; height: 16px; background: #454545; display: flex; align-items: center; justify-content: center; }
.hs-btn.end { left: auto; right: 0; }
.hs-btn i { width: 0; height: 0; border-top: 4px solid transparent; border-bottom: 4px solid transparent; }
.hs-btn i.left { border-right: 4px solid #aaa; }
.hs-btn i.right { border-left: 4px solid #aaa; }
.hs-thumb { position: absolute; left: 198px; width: 231px; top: 0; height: 16px; background: #505050; }
.sheet-tabs {
  grid-column: 1 / 5; grid-row: 4; display: flex; align-items: center; padding: 3px 0 0 15px; font-size: 11.8px;
}
.st { color: #a8a8a8; }
.st.active { color: #fff; font-weight: 700; }
.st-sep { width: 1px; height: 18px; background: #5a5a5a; margin: 0 16.5px; }
.st.all { display: flex; align-items: center; gap: 7px; }
.st.all i { width: 0; height: 0; border-left: 4px solid transparent; border-right: 4px solid transparent; border-bottom: 4px solid #eee; }
.sheet-tabs svg { margin-left: -7px; }

/* right panes */
.panes { padding-left: 8px; padding-right: 5px; display: flex; flex-direction: column; min-height: 0; }
.pane-head { display: flex; align-items: center; height: 30px; flex-shrink: 0; padding-left: 3px; }
.pane-head h2 { flex: 1; font-size: 21.4px; }
.pane-head svg { margin-left: 5px; }
.pane-head .pane-max { margin-bottom: 2px; }
.pane-head svg:last-child { margin-right: 4px; margin-bottom: 2px; }
.first { margin-top: 21px; }
.pane-rule { height: 1px; background: #3a3a3a; margin-top: 16px; flex-shrink: 0; }
.second { margin-top: 14px; }
.data-table { margin-top: 3.5px; position: relative; height: 146px; flex-shrink: 0; }
.data-table::after {
  content: ""; position: absolute; left: 106px; top: 0; bottom: 0; width: 1px; background: #5a5a5a;
}
.data-row {
  height: 20.8px; border-bottom: 1px solid #5a5a5a; box-sizing: border-box; padding: 1px 0 0 3px;
  font-weight: 700; font-size: 11.8px; color: #f2f2f2; display: flex; align-items: center;
}
.data-row:last-child { border-bottom: 0; }
.third { margin-top: 54.5px; }
.tree {
  background: #fff; color: #222; flex: 1; margin-top: 3px; margin-left: 1px; font-size: 11.9px; padding-top: 1.5px; line-height: 17.6px;
}
.tree-root { display: flex; align-items: center; gap: 1px; padding-left: 1px; height: 17.6px; }
.tree-list { position: relative; }
.tree-list::before {
  content: ""; position: absolute; left: 5px; top: 0; height: 115px; width: 1px; background: #ccc;
}
.tree-row { display: flex; align-items: center; height: 17.6px; padding-left: 2px; white-space: nowrap; position: relative; }
.plus {
  width: 8px; height: 8px; border: 1px solid #bbb; background: #fff; color: #36c; font-size: 8px; line-height: 6px; text-align: center;
  margin-right: 1px; flex-shrink: 0; box-sizing: border-box; position: relative; z-index: 1;
}
.elbow { width: 6px; height: 1px; background: #ccc; margin-left: 3px; flex-shrink: 0; }
.tree-row svg { margin-right: 1px; }

/* status */
.statusbar {
  height: 23px; flex-shrink: 0; background: #2f2f2f; display: flex; align-items: center;
  font-size: 10.5px; color: #d6d6d6; padding-left: 8px;
}
.s1 { width: 72px; }
.s2 { width: 84px; }
.s3 { width: 87px; }
.s4 { width: 79px; }
.s5 { width: 128px; }
.present { margin-right: 17px; }
.zoom-minus { width: 7px; height: 2px; background: #eee; margin-right: 4px; }
.slider { width: 103px; height: 2px; background: #aaa; position: relative; display: block; }
.slider .mid { position: absolute; left: 51px; top: -3px; width: 1px; height: 8px; background: #aaa; }
.slider .knob { position: absolute; left: 21px; top: -5px; width: 5px; height: 12px; background: #f2f2f2; }
.zoom-plus { width: 8px; height: 8px; margin-left: 4px; position: relative; }
.zoom-plus::before { content: ""; position: absolute; left: 0; top: 3px; width: 8px; height: 2px; background: #eee; }
.zoom-plus::after { content: ""; position: absolute; left: 3px; top: 0; width: 2px; height: 8px; background: #eee; }
.pct { margin-left: 11px; width: 32px; font-size: 11px; }
.fit { margin-left: 2px; }
.switch { margin-left: 15px; margin-right: 20px; }
</style>
